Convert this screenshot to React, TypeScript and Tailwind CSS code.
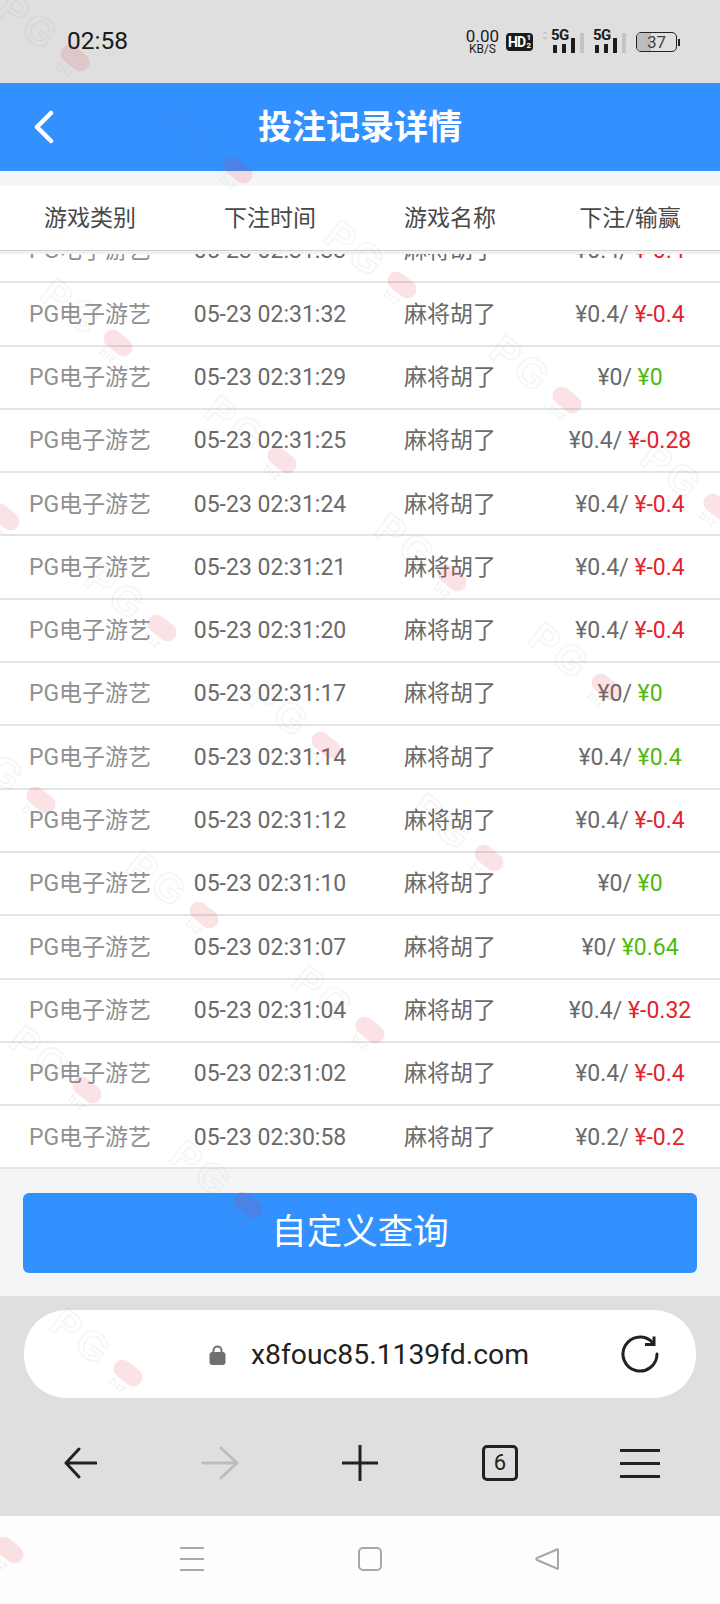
import React from "react";

type Row = { time: string; bet: string; win: string };

const rows: Row[] = [
  { time: "05-23 02:31:33", bet: "¥0.4/", win: "¥-0.4" },
  { time: "05-23 02:31:32", bet: "¥0.4/", win: "¥-0.4" },
  { time: "05-23 02:31:29", bet: "¥0/", win: "¥0" },
  { time: "05-23 02:31:25", bet: "¥0.4/", win: "¥-0.28" },
  { time: "05-23 02:31:24", bet: "¥0.4/", win: "¥-0.4" },
  { time: "05-23 02:31:21", bet: "¥0.4/", win: "¥-0.4" },
  { time: "05-23 02:31:20", bet: "¥0.4/", win: "¥-0.4" },
  { time: "05-23 02:31:17", bet: "¥0/", win: "¥0" },
  { time: "05-23 02:31:14", bet: "¥0.4/", win: "¥0.4" },
  { time: "05-23 02:31:12", bet: "¥0.4/", win: "¥-0.4" },
  { time: "05-23 02:31:10", bet: "¥0/", win: "¥0" },
  { time: "05-23 02:31:07", bet: "¥0/", win: "¥0.64" },
  { time: "05-23 02:31:04", bet: "¥0.4/", win: "¥-0.32" },
  { time: "05-23 02:31:02", bet: "¥0.4/", win: "¥-0.4" },
  { time: "05-23 02:30:58", bet: "¥0.2/", win: "¥-0.2" },
];

// watermark anchor points (centre of the red pill)
const marks = [
  [75, 58], [238, 170], [402, 285], [567, 400], [718, 507],
  [118, 343], [282, 460], [452, 578], [606, 687],
  [5, 517], [162, 628], [326, 745], [489, 858],
  [41, 800], [204, 915], [370, 1030],
  [87, 1090], [248, 1205], [128, 1373], [9, 1550],
];

const Watermark = ({ x, y }: { x: number; y: number }) => (
  <div className="absolute w-0 h-0 rotate-[38deg]" style={{ left: x, top: y }}>
    <div className="absolute left-[-16px] top-[-9px] w-[32px] h-[18px] rounded-full bg-[rgba(225,50,70,0.14)]" />
    <div className="absolute left-[-96px] top-[-25px] w-[76px] text-center text-[40px] leading-[50px] font-bold tracking-[4px] text-transparent font-['Liberation_Sans',sans-serif] [-webkit-text-stroke:2px_rgba(120,120,120,0.07)]">
      PG
    </div>
    <div className="absolute left-[-20px] top-[9px] w-[36px] text-center text-[13px] leading-[14px] tracking-[1px] text-[rgba(120,120,120,0.12)] font-['Liberation_Sans',sans-serif]">
      .biz
    </div>
  </div>
);

const Signal = ({ arrows }: { arrows?: boolean }) => (
  <div className="relative w-[36px] h-[22px] flex items-end gap-[5px] pl-[2px]">
    <div className="w-[4px] h-[8px] bg-[#1c1c1c]" />
    <div className="w-[4px] h-[9px] bg-[#1c1c1c]" />
    <div className="w-[4px] h-[15px] bg-[#1c1c1c]" />
    <div className="w-[4px] h-[20px] bg-[#c4c4c4]" />
    <span className="absolute left-0 top-[-2px] text-[15px] leading-[13px] font-bold text-[#1c1c1c] tracking-[-0.5px]">
      5G
    </span>
    {arrows && (
      <svg className="absolute left-[-9px] top-0" width="6" height="9" viewBox="0 0 6 9">
        <path d="M3 0 L6 3 H0 Z M3 9 L6 6 H0 Z" fill="#c8c8c8" />
      </svg>
    )}
  </div>
);

const StatusBar = () => (
  <div className="h-[83px] bg-[#dfdfdf] flex items-center pl-[67px] pr-[40px]">
    <span className="text-[24.5px] text-[#1a1a1a]">02:58</span>
    <div className="ml-auto flex items-center pt-[1px]">
      <div className="flex flex-col items-center mr-[7px] text-[#1c1c1c]">
        <span className="text-[17px] leading-[15px]">0.00</span>
        <span className="text-[12px] leading-[11px]">KB/S</span>
      </div>
      <div className="w-[27px] h-[18px] bg-[#1a1a1a] rounded-[4px] flex items-center justify-center text-white font-bold mr-[18px]">
        <span className="text-[14px] leading-[14px] tracking-[-0.8px]">HD</span>
        <span className="flex flex-col text-[8px] leading-[8px] ml-[1px]">
          <span>1</span>
          <span>2</span>
        </span>
      </div>
      <div className="mr-[6px]">
        <Signal arrows />
      </div>
      <div className="mr-[5px]">
        <Signal />
      </div>
      <div className="ml-[2px] relative w-[41px] h-[20px] border-[1.5px] border-[#222] rounded-[5px] overflow-hidden">
        <div className="absolute left-0 top-0 bottom-0 w-[14px] bg-[#bdbdbd]" />
        <div className="absolute inset-0 flex items-center justify-center text-[17px] leading-none text-[#444]">37</div>
      </div>
      <div className="w-[2px] h-[7px] bg-[#222] ml-[1px]" />
    </div>
  </div>
);

const Header = () => (
  <div className="relative h-[88px] bg-[#3390ff] flex items-center justify-center">
    <svg className="absolute left-[32px] top-[27px]" width="24" height="34" viewBox="0 0 24 34" fill="none">
      <path d="M19 3 L5 17 L19 31" stroke="#fff" strokeWidth="4.5" strokeLinecap="round" strokeLinejoin="round" />
    </svg>
    <span className="text-[34px] font-bold text-white leading-none">投注记录详情</span>
  </div>
);

const TableHead = () => (
  <div className="relative z-10 grid grid-cols-4 h-[65px] pt-[3px] bg-white border-b border-[#cfcfcf] shadow-[0_3px_0_#f1f1f1] text-[23px] text-[#484848] text-center items-center">
    <span>游戏类别</span>
    <span>下注时间</span>
    <span>游戏名称</span>
    <span>下注/输赢</span>
  </div>
);

const RecordRow = ({ row }: { row: Row }) => {
  const lost = row.win.startsWith("¥-");
  return (
    <div className="grid grid-cols-4 h-[63.3px] pt-[2px] items-center text-center text-[23px] border-b-2 border-[#e4e4e4] shrink-0">
      <span className="text-[#909090]">PG电子游艺</span>
      <span className="text-[#6a6a6a]">{row.time}</span>
      <span className="text-[#6a6a6a]">麻将胡了</span>
      <span className="text-[#6a6a6a]">
        {row.bet} <span className={lost ? "text-[#e1242c]" : "text-[#52b80c]"}>{row.win}</span>
      </span>
    </div>
  );
};

const UrlBar = () => (
  <div className="h-[116px] bg-[#dfdfdf] pt-[14px] px-[24px]">
    <div className="relative h-[88px] bg-white rounded-[42px] flex items-center justify-center pl-[18px] pt-[2px]">
      <svg className="mr-[25px]" width="17" height="20" viewBox="0 0 17 20" fill="none">
        <path d="M4.5 8 V5.5 a4 4 0 0 1 8 0 V8" stroke="#6f6f6f" strokeWidth="2" />
        <rect x="0.5" y="7" width="16" height="13" rx="3" fill="#6f6f6f" />
      </svg>
      <span className="text-[28.3px] text-[#222]">x8fouc85.1139fd.com</span>
      <svg className="absolute right-[37px] top-[25px]" width="38" height="38" viewBox="0 0 38 38" fill="none">
        <path d="M31 7 A17 17 0 1 0 36 19" stroke="#222" strokeWidth="3" strokeLinecap="round" />
        <path d="M24 9.5 L33 9.5 L33 1.5" stroke="#222" strokeWidth="3" />
      </svg>
    </div>
  </div>
);

const Toolbar = () => (
  <div className="h-[104px] bg-[#dfdfdf] grid grid-cols-5 px-[10px] pb-[2px] items-center justify-items-center">
    <svg width="34" height="32" viewBox="0 0 34 32" fill="none">
      <path d="M16 2 L3 16 L16 30 M3 16 H33" stroke="#222" strokeWidth="3" strokeLinecap="round" strokeLinejoin="round" />
    </svg>
    <svg width="38" height="34" viewBox="0 0 38 34" fill="none">
      <path d="M20 2 L36 17 L20 32 M36 17 H2" stroke="#bdbdbd" strokeWidth="3" strokeLinecap="round" strokeLinejoin="round" />
    </svg>
    <svg width="36" height="36" viewBox="0 0 36 36" fill="none">
      <path d="M18 0 V36 M0 18 H36" stroke="#222" strokeWidth="3" />
    </svg>
    <div className="w-[36px] h-[36px] border-[3px] border-[#222] rounded-[5px] flex items-center justify-center text-[22px] leading-none text-[#222] font-['Liberation_Sans_Narrow','Roboto',sans-serif]">
      6
    </div>
    <div className="w-[40px] flex flex-col gap-[10px]">
      <div className="h-[3px] bg-[#222]" />
      <div className="h-[3px] bg-[#222]" />
      <div className="h-[3px] bg-[#222]" />
    </div>
  </div>
);

const NavBar = () => (
  <div className="h-[88px] bg-[#fdfdfd] grid grid-cols-3 w-[533px] ml-[103px] pb-[2px] items-center justify-items-center">
    <div className="w-[24px] h-[24px] flex flex-col justify-between">
      <div className="h-[2px] bg-[#a8a8a8]" />
      <div className="h-[2px] bg-[#a8a8a8]" />
      <div className="h-[2px] bg-[#a8a8a8]" />
    </div>
    <div className="w-[24px] h-[24px] ml-[1px] border-2 border-[#a8a8a8] rounded-[5px]" />
    <svg width="24" height="24" viewBox="0 0 24 24" fill="none">
      <path d="M22 2.5 Q23 1.5 23 3 V21 Q23 22.5 22 21.5 L2 13 Q0.5 12 2 11 Z" stroke="#a8a8a8" strokeWidth="2" strokeLinejoin="round" />
    </svg>
  </div>
);

const App = () => (
  <div className="relative w-[720px] h-[1604px] overflow-hidden flex flex-col bg-[#fdfdfd] font-['Roboto','Noto_Sans_CJK_SC',sans-serif]">
    <StatusBar />
    <Header />
    <div className="h-[15px] bg-[#f4f5f7]" />
    <TableHead />
    {/* list is scrolled, so its first row is cut by the head */}
    <div className="h-[918px] overflow-hidden bg-white flex flex-col">
      <div className="-mt-[31px] flex flex-col">
        {rows.map((row) => (
          <RecordRow key={row.time} row={row} />
        ))}
      </div>
    </div>
    <div className="h-[127px] bg-[#f4f5f7] pt-[24px] px-[23px]">
      <div className="h-[80px] bg-[#3390ff] rounded-[6px] flex items-center justify-center text-[35.5px] text-white">
        自定义查询
      </div>
    </div>
    <UrlBar />
    <Toolbar />
    <NavBar />
    <div className="absolute inset-0 pointer-events-none z-20">
      {marks.map(([x, y]) => (
        <Watermark key={`${x}-${y}`} x={x} y={y} />
      ))}
    </div>
  </div>
);

export default App;
